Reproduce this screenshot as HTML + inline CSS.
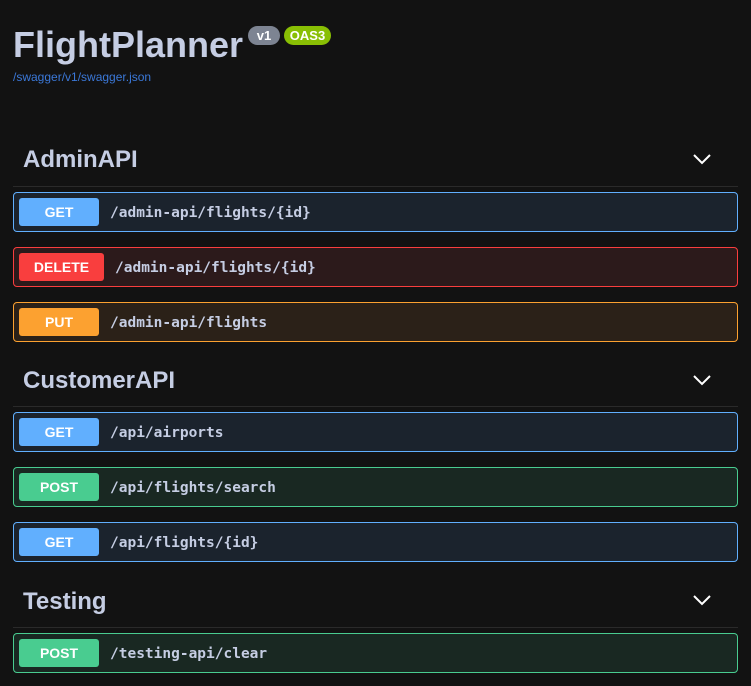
<!DOCTYPE html>
<html><head><meta charset="utf-8"><style>
body{margin:0;background:#121212;width:751px;height:686px;overflow:hidden;font-family:"Liberation Sans",Arial,sans-serif;position:relative}
.t{position:absolute;left:13px;top:24px;font-size:36px;font-weight:bold;color:#c5cde3;letter-spacing:0}
.b{position:absolute;top:26px;height:19px;border-radius:10px;color:#fff;font-weight:bold;font-size:13px;line-height:19px;text-align:center}
.lnk{position:absolute;left:13px;top:70px;font-size:12px;color:#3b78d8}
.h{position:absolute;left:23px;font-size:24px;font-weight:bold;color:#c5cde3}
.ln{position:absolute;left:13px;width:725px;height:1px;background:#2a2a2a}
.ch{position:absolute;left:693px}
.op{position:absolute;left:13px;width:723px;height:38px;border:1px solid;border-radius:4px}
.m{position:absolute;left:5px;top:5px;height:28px;border-radius:3px;color:#fff;font-weight:bold;font-size:14px;line-height:28px;text-align:center;width:80px}
.p{position:absolute;top:1px;line-height:38px;font-family:"DejaVu Sans Mono","Liberation Mono",monospace;font-weight:bold;font-size:14.5px;color:#c5cde3}
.g{background:#1b232d;border-color:#61affe}.g .m{background:#61affe}
.d{background:#2c1a1b;border-color:#f93e3e}.d .m{background:#f93e3e;width:85px}
.u{background:#2b2118;border-color:#fca130}.u .m{background:#fca130}
.s{background:#192822;border-color:#49cc90}.s .m{background:#49cc90}
</style></head><body>
<div class="t">FlightPlanner</div>
<div class="b" style="left:248px;width:32px;background:#7d8492">v1</div>
<div class="b" style="left:284px;width:47px;background:#89bf04">OAS3</div>
<div class="lnk">/swagger/v1/swagger.json</div>

<div class="h" style="top:146px">AdminAPI</div>
<svg class="ch" style="top:153px" width="18" height="12"><path d="M1 2 L9 10 L17 2" stroke="#fff" stroke-width="2" fill="none"/></svg>
<div class="ln" style="top:186px"></div>
<div class="op g" style="top:192px"><div class="m">GET</div><div class="p" style="left:96px">/admin-api/flights/{id}</div></div>
<div class="op d" style="top:247px"><div class="m">DELETE</div><div class="p" style="left:101px">/admin-api/flights/{id}</div></div>
<div class="op u" style="top:302px"><div class="m">PUT</div><div class="p" style="left:96px">/admin-api/flights</div></div>

<div class="h" style="top:367px">CustomerAPI</div>
<svg class="ch" style="top:374px" width="18" height="12"><path d="M1 2 L9 10 L17 2" stroke="#fff" stroke-width="2" fill="none"/></svg>
<div class="ln" style="top:406px"></div>
<div class="op g" style="top:412px"><div class="m">GET</div><div class="p" style="left:96px">/api/airports</div></div>
<div class="op s" style="top:467px"><div class="m">POST</div><div class="p" style="left:96px">/api/flights/search</div></div>
<div class="op g" style="top:522px"><div class="m">GET</div><div class="p" style="left:96px">/api/flights/{id}</div></div>

<div class="h" style="top:588px">Testing</div>
<svg class="ch" style="top:594px" width="18" height="12"><path d="M1 2 L9 10 L17 2" stroke="#fff" stroke-width="2" fill="none"/></svg>
<div class="ln" style="top:627px"></div>
<div class="op s" style="top:633px"><div class="m">POST</div><div class="p" style="left:96px">/testing-api/clear</div></div>
</body></html>
